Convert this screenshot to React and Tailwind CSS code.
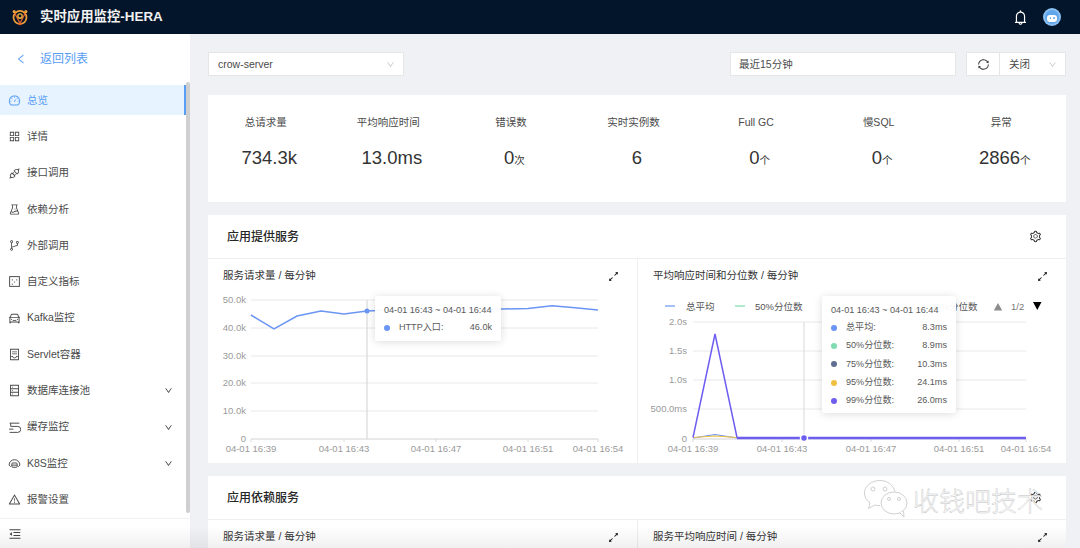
import {
  AiOutlineApi,
  AiOutlineAppstore,
  AiOutlineBell,
  AiOutlineBranches,
  AiOutlineCar,
  AiOutlineContainer,
  AiOutlineDashboard,
  AiOutlineDatabase,
  AiOutlineDown,
  AiOutlineExpandAlt,
  AiOutlineExperiment,
  AiOutlineLeft,
  AiOutlineMenuFold,
  AiOutlineSetting,
  AiOutlineSync,
  AiOutlineWarning,
} from 'react-icons/ai';

function MetricIcon({ className }) {
  return (
    <svg viewBox="0 0 12 12" fill="none" stroke="currentColor" strokeWidth="0.9" className={className}>
      <rect x="1.5" y="1.5" width="9" height="9" />
      <path d="M3.5 4.5h1M7.5 4.5h1M5.5 6.5h1M3.5 8.5h1" />
    </svg>
  );
}

function CacheIcon({ className }) {
  return (
    <svg viewBox="0 0 12 12" fill="none" stroke="currentColor" strokeWidth="0.9" className={className}>
      <path d="M1.5 2h9M2.5 2v3h6.5M1.5 10.5h7.5a2.5 2.5 0 0 0 0-5.5" />
      <path d="M1 7.5h4" />
    </svg>
  );
}

function K8sIcon({ className }) {
  return (
    <svg viewBox="0 0 12 12" fill="none" stroke="currentColor" strokeWidth="0.9" className={className}>
      <path d="M1 7.5a5 5 0 0 1 10 0M1 7.5l1.5 1.5M11 7.5l-1.5 1.5" />
      <rect x="3.5" y="5.5" width="5" height="4" rx="1" />
      <path d="M3.5 7.5h5" />
    </svg>
  );
}

function Logo() {
  return (
    <svg viewBox="0 0 20 20" className="w-[18px] h-[18px]" fill="none">
      <circle cx="10" cy="10.5" r="7.2" stroke="#efa03a" strokeWidth="1.9" />
      <path d="M3.5 4.5L10 17l6.5-12.5" stroke="#e0602f" strokeWidth="1.5" strokeLinejoin="round" />
      <circle cx="10" cy="9" r="2.4" stroke="#f4b53c" strokeWidth="1.5" />
      <circle cx="3.5" cy="4" r="1.7" fill="#f0a53a" />
      <circle cx="16.5" cy="4" r="1.7" fill="#f0a53a" />
      <circle cx="10" cy="17.5" r="1.7" fill="#e0602f" />
    </svg>
  );
}

function Avatar() {
  return (
    <div className="w-[18px] h-[18px] rounded-full bg-[#8cc0f2] flex items-center justify-center">
      <div className="w-[14px] h-[14px] rounded-full bg-[#5fa6ea] flex items-center justify-center">
        <div className="w-[10px] h-[7px] mt-[2px] rounded-[3px] bg-white flex items-center justify-center gap-[2px]">
          <span className="w-[1.5px] h-[1.5px] rounded-full bg-[#5fa6ea]" />
          <span className="w-[1.5px] h-[1.5px] rounded-full bg-[#5fa6ea]" />
        </div>
      </div>
    </div>
  );
}

const menu = [
  { label: '总览', icon: AiOutlineDashboard, active: true },
  { label: '详情', icon: AiOutlineAppstore },
  { label: '接口调用', icon: AiOutlineApi },
  { label: '依赖分析', icon: AiOutlineExperiment },
  { label: '外部调用', icon: AiOutlineBranches },
  { label: '自定义指标', icon: MetricIcon },
  { label: 'Kafka监控', icon: AiOutlineCar },
  { label: 'Servlet容器', icon: AiOutlineContainer },
  { label: '数据库连接池', icon: AiOutlineDatabase, arrow: true },
  { label: '缓存监控', icon: CacheIcon, arrow: true },
  { label: 'K8S监控', icon: K8sIcon, arrow: true },
  { label: '报警设置', icon: AiOutlineWarning },
];

const stats = [
  { label: '总请求量', value: '734.3k' },
  { label: '平均响应时间', value: '13.0ms' },
  { label: '错误数', value: '0', unit: '次' },
  { label: '实时实例数', value: '6' },
  { label: 'Full GC', value: '0', unit: '个' },
  { label: '慢SQL', value: '0', unit: '个' },
  { label: '异常', value: '2866', unit: '个' },
];

const axisText = { fontSize: 9.5, fill: '#9a9a9a' };

function XLabels({ ticks, y }) {
  return ticks.map(([x, label]) => (
    <g key={x}>
      <line x1={x} x2={x} y1={y} y2={y + 3} stroke="#d9d9d9" />
      <text x={x} y={y + 13} textAnchor="middle" style={axisText}>
        {label}
      </text>
    </g>
  ));
}

function RequestChart() {
  const rows = [
    [6, '50.0k'],
    [34, '40.0k'],
    [62, '30.0k'],
    [89, '20.0k'],
    [117, '10.0k'],
  ];
  return (
    <svg width="426" height="170" className="block mt-[1px] ml-[2px]">
      {rows.map(([y, label]) => (
        <g key={y}>
          <line x1="41" x2="388" y1={y} y2={y} stroke="#e8e8e8" />
          <text x="36" y={y + 3} textAnchor="end" style={axisText}>
            {label}
          </text>
        </g>
      ))}
      <line x1="41" x2="388" y1="145" y2="145" stroke="#d4d4d4" />
      <text x="36" y="148" textAnchor="end" style={axisText}>
        0
      </text>
      <XLabels
        y={145}
        ticks={[
          [41, '04-01 16:39'],
          [134, '04-01 16:43'],
          [226, '04-01 16:47'],
          [318, '04-01 16:51'],
          [388, '04-01 16:54'],
        ]}
      />
      <line x1="157" x2="157" y1="6" y2="145" stroke="#d9d9d9" strokeWidth="1.2" />
      <polyline
        fill="none"
        stroke="#6b95f4"
        strokeWidth="1.5"
        points="41,21 64,35 87,22 111,17 134,20 157,17 180,16 204,16 250,16 292,15 318,14.5 342,11.7 365,13.7 388,16"
      />
      <circle cx="157" cy="17" r="2.5" fill="#6b95f4" />
    </svg>
  );
}

function LatencyChart() {
  const rows = [
    [28, '2.0s'],
    [57, '1.5s'],
    [86, '1.0s'],
    [115, '500.0ms'],
  ];
  return (
    <svg width="426" height="170" className="block mt-[1px] ml-[2px]">
      <g style={{ fontSize: 9.5, fill: '#555' }}>
        <line x1="25" x2="35" y1="12" y2="12" stroke="#6b95f4" strokeWidth="1.2" />
        <text x="46" y="16">总平均</text>
        <line x1="95" x2="105" y1="12" y2="12" stroke="#7fdcae" strokeWidth="1.2" />
        <text x="115" y="16">50%分位数</text>
        <text x="290" y="16">95%分位数</text>
      </g>
      <path d="M358 9l-4.2 7.5h8.4z" fill="#8c8c8c" />
      <text x="371" y="16" style={{ fontSize: 9.5, fill: '#777' }}>
        1/2
      </text>
      <path d="M393 8h8.5l-4.25 8z" fill="#000" />
      {rows.map(([y, label]) => (
        <g key={y}>
          <line x1="53" x2="386" y1={y} y2={y} stroke="#e8e8e8" />
          <text x="47" y={y + 3} textAnchor="end" style={axisText}>
            {label}
          </text>
        </g>
      ))}
      <line x1="53" x2="386" y1="145" y2="145" stroke="#d4d4d4" />
      <text x="47" y="148" textAnchor="end" style={axisText}>
        0
      </text>
      <XLabels
        y={145}
        ticks={[
          [53, '04-01 16:39'],
          [142, '04-01 16:43'],
          [231, '04-01 16:47'],
          [319, '04-01 16:51'],
          [386, '04-01 16:54'],
        ]}
      />
      <line x1="164" x2="164" y1="28" y2="145" stroke="#d9d9d9" />
      <polyline fill="none" stroke="#6b95f4" strokeWidth="1.2" points="53,144 75,140.5 97,144 386,144" />
      <polyline fill="none" stroke="#f0c040" strokeWidth="1.2" points="53,143.5 75,142 97,143.5 140,144" />
      <polyline fill="none" stroke="#6e5ef0" strokeWidth="1.5" points="53,143.5 75,40 97,143.5" />
      <line x1="97" x2="386" y1="144" y2="144" stroke="#6e5ef0" strokeWidth="2.5" />
      <circle cx="164" cy="144" r="3.5" fill="#6e5ef0" stroke="#fff" strokeWidth="1.5" />
    </svg>
  );
}

function Tooltip({ rows, className }) {
  return (
    <div
      className={`absolute rounded-[3px] bg-white/95 px-[9px] pt-[7px] text-[9.1px] text-[#595959] shadow-[0_1px_8px_rgba(0,0,0,0.14)] ${className}`}
    >
      <div className="leading-[15px] whitespace-nowrap">04-01 16:43 ~ 04-01 16:44</div>
      <div className="mt-[1px] flex flex-col">
        {rows.map(([color, name, value]) => (
          <div key={name} className="flex items-center h-[18.2px]">
            <span className="w-[6px] h-[6px] rounded-full mr-[9px]" style={{ background: color }} />
            <span className="flex-1">{name}</span>
            <span>{value}</span>
          </div>
        ))}
      </div>
    </div>
  );
}

function ChartPanel({ title, children, border }) {
  return (
    <div className={`relative h-[204px] ${border ? 'border-l border-[#eeeeee]' : ''}`}>
      <div className="h-[34px] flex items-center justify-between pl-[15px] pr-[17px] text-[10.5px] text-[#333]">
        <span>{title}</span>
        <AiOutlineExpandAlt className="w-[13px] h-[13px] text-[#222]" />
      </div>
      {children}
    </div>
  );
}

function Section({ title, children, className }) {
  return (
    <section className={`bg-white ${className}`}>
      <div className="h-[44px] flex items-center justify-between pl-[19px] pr-[24px] border-b border-[#eeeeee]">
        <span className="text-[12px] font-medium text-[#262626]">{title}</span>
        <AiOutlineSetting className="w-[13px] h-[13px] text-[#333]" />
      </div>
      <div className="grid grid-cols-2">{children}</div>
    </section>
  );
}

export default function App() {
  return (
    <div
      className="relative h-[548px] w-[1080px] overflow-hidden bg-[#eff1f5] flex flex-col"
      style={{ fontFamily: '"Liberation Sans", "Noto Sans CJK SC", sans-serif' }}
    >
      {/* Top bar */}
      <header className="h-[34px] shrink-0 bg-[#03152a] flex items-center pl-[11px] pr-[19px]">
        <Logo />
        <span className="ml-[11px] text-[13.4px] font-bold text-[#f2f2f2]">实时应用监控-HERA</span>
        <div className="ml-auto flex items-center gap-[14px]">
          <AiOutlineBell className="w-[17px] h-[17px] text-white" />
          <Avatar />
        </div>
      </header>

      <div className="flex flex-1 min-h-0">
        {/* Sidebar */}
        <aside className="w-[190px] shrink-0 bg-white flex flex-col">
          <div className="h-[48px] shrink-0 flex items-center pl-[15px] pt-[1px] text-[12px] text-[#5a9df5]">
            <AiOutlineLeft className="w-[12px] h-[12px]" />
            <span className="ml-[13px]">返回列表</span>
          </div>
          <div className="flex flex-1 min-h-0">
            <nav className="flex-1 pt-[3px]">
              {menu.map((item) => {
                const Icon = item.icon;
                return (
                  <div
                    key={item.label}
                    className={`h-[30px] mb-[6.3px] pt-[1px] flex items-center pl-[8px] pr-[13px] text-[10.5px] ${
                      item.active
                        ? 'bg-[#e7f4ff] text-[#5a9df5] border-r-[2px] border-[#5a9df5]'
                        : 'text-[#4a4a4a]'
                    }`}
                  >
                    <Icon className="w-[13px] h-[13px]" />
                    <span className="ml-[6px] flex-1">{item.label}</span>
                    {item.arrow && <AiOutlineDown className="w-[9px] h-[9px] text-[#333]" />}
                  </div>
                );
              })}
            </nav>
            <div className="w-[4px] mb-[5px] rounded-full bg-[#cfcfcf]" />
          </div>
          <div className="h-[30px] shrink-0 border-t border-[#f0f0f0] flex items-center pl-[8px]">
            <AiOutlineMenuFold className="w-[14px] h-[14px] text-[#444]" />
          </div>
        </aside>

        {/* Main */}
        <main className="flex-1 min-w-0 pl-[18px] pr-[14px] pt-[18px]">
          <div className="h-[24px] flex text-[10.5px] text-[#4a4a4a]">
            <div className="w-[196px] pt-[1px] bg-white border border-[#e6e6e6] flex items-center justify-between pl-[9px] pr-[8px]">
              crow-server
              <AiOutlineDown className="w-[9px] h-[9px] text-[#c4c4c4]" />
            </div>
            <div className="ml-auto w-[226px] pt-[1px] bg-white border border-[#e6e6e6] flex items-center pl-[8px]">
              最近15分钟
            </div>
            <div className="ml-[10px] w-[100px] bg-white border border-[#e6e6e6] flex items-center">
              <div className="w-[33px] h-full border-r border-[#e6e6e6] flex items-center justify-center">
                <AiOutlineSync className="w-[13px] h-[13px] text-[#333]" />
              </div>
              <div className="flex-1 pt-[1px] flex items-center justify-between pl-[9px] pr-[8px]">
                关闭
                <AiOutlineDown className="w-[9px] h-[9px] text-[#c4c4c4]" />
              </div>
            </div>
          </div>

          <section className="mt-[19px] h-[107px] bg-white grid grid-cols-7">
            {stats.map((s) => (
              <div key={s.label} className="flex flex-col items-center pt-[20px]">
                <div className="h-[14px] mr-[7px] text-[10.5px] leading-[14px] text-[#4a4a4a]">{s.label}</div>
                <div className="mt-[16px] h-[26px] leading-[26px] text-[18.5px] text-[#333]">
                  {s.value}
                  {s.unit && <span className="text-[10.5px]">{s.unit}</span>}
                </div>
              </div>
            ))}
          </section>

          <Section title="应用提供服务" className="mt-[13px]">
            <ChartPanel title="服务请求量 / 每分钟">
              <RequestChart />
              <Tooltip
                className="left-[167px] top-[37px] w-[126px] h-[45px]"
                rows={[['#6b95f4', 'HTTP入口:', '46.0k']]}
              />
            </ChartPanel>
            <ChartPanel title="平均响应时间和分位数 / 每分钟" border>
              <LatencyChart />
              <Tooltip
                className="left-[184px] top-[37px] w-[134px] h-[117px]"
                rows={[
                  ['#6b95f4', '总平均:', '8.3ms'],
                  ['#7fdcae', '50%分位数:', '8.9ms'],
                  ['#5f6f94', '75%分位数:', '10.3ms'],
                  ['#f0c040', '95%分位数:', '24.1ms'],
                  ['#6e5ef0', '99%分位数:', '26.0ms'],
                ]}
              />
            </ChartPanel>
          </Section>

          <Section title="应用依赖服务" className="mt-[13px]">
            <ChartPanel title="服务请求量 / 每分钟" />
            <ChartPanel title="服务平均响应时间 / 每分钟" border />
          </Section>
        </main>
      </div>

      {/* 底部阴影 */}
      <div className="absolute left-0 right-[14px] bottom-0 h-[22px] bg-linear-to-t from-black/6 to-transparent pointer-events-none" />

      {/* 水印 */}
      <div className="absolute left-[864px] top-[480px] flex items-start pointer-events-none">
        <svg viewBox="0 0 44 38" className="w-[44px] h-[38px]" fill="none" stroke="#c4c4c4" strokeWidth="0.8">
          <path d="M16 .5C7.5 .5 .5 6 .5 13c0 4 2 7.5 5.5 9.5l-1.5 6 6.5-3.5c1.500.5 3 .5 5 .5" fill="#fff" />
          <path d="M16 .5c7 0 13 4 15 11" />
          <ellipse cx="30" cy="23" rx="13" ry="11" fill="#fff" />
          <path d="M36 33l4 4-.5-6" fill="#fff" />
          <circle cx="9" cy="9" r="2" />
          <circle cx="21" cy="9" r="2" />
          <circle cx="25" cy="19" r="1.5" />
          <circle cx="35" cy="19" r="1.5" />
        </svg>
        <span className="ml-[5px] mt-[7px] text-[26px] leading-[30px] font-light text-white [-webkit-text-stroke:0.4px_#c0c0c0]">
          收钱吧技术
        </span>
      </div>
    </div>
  );
}
